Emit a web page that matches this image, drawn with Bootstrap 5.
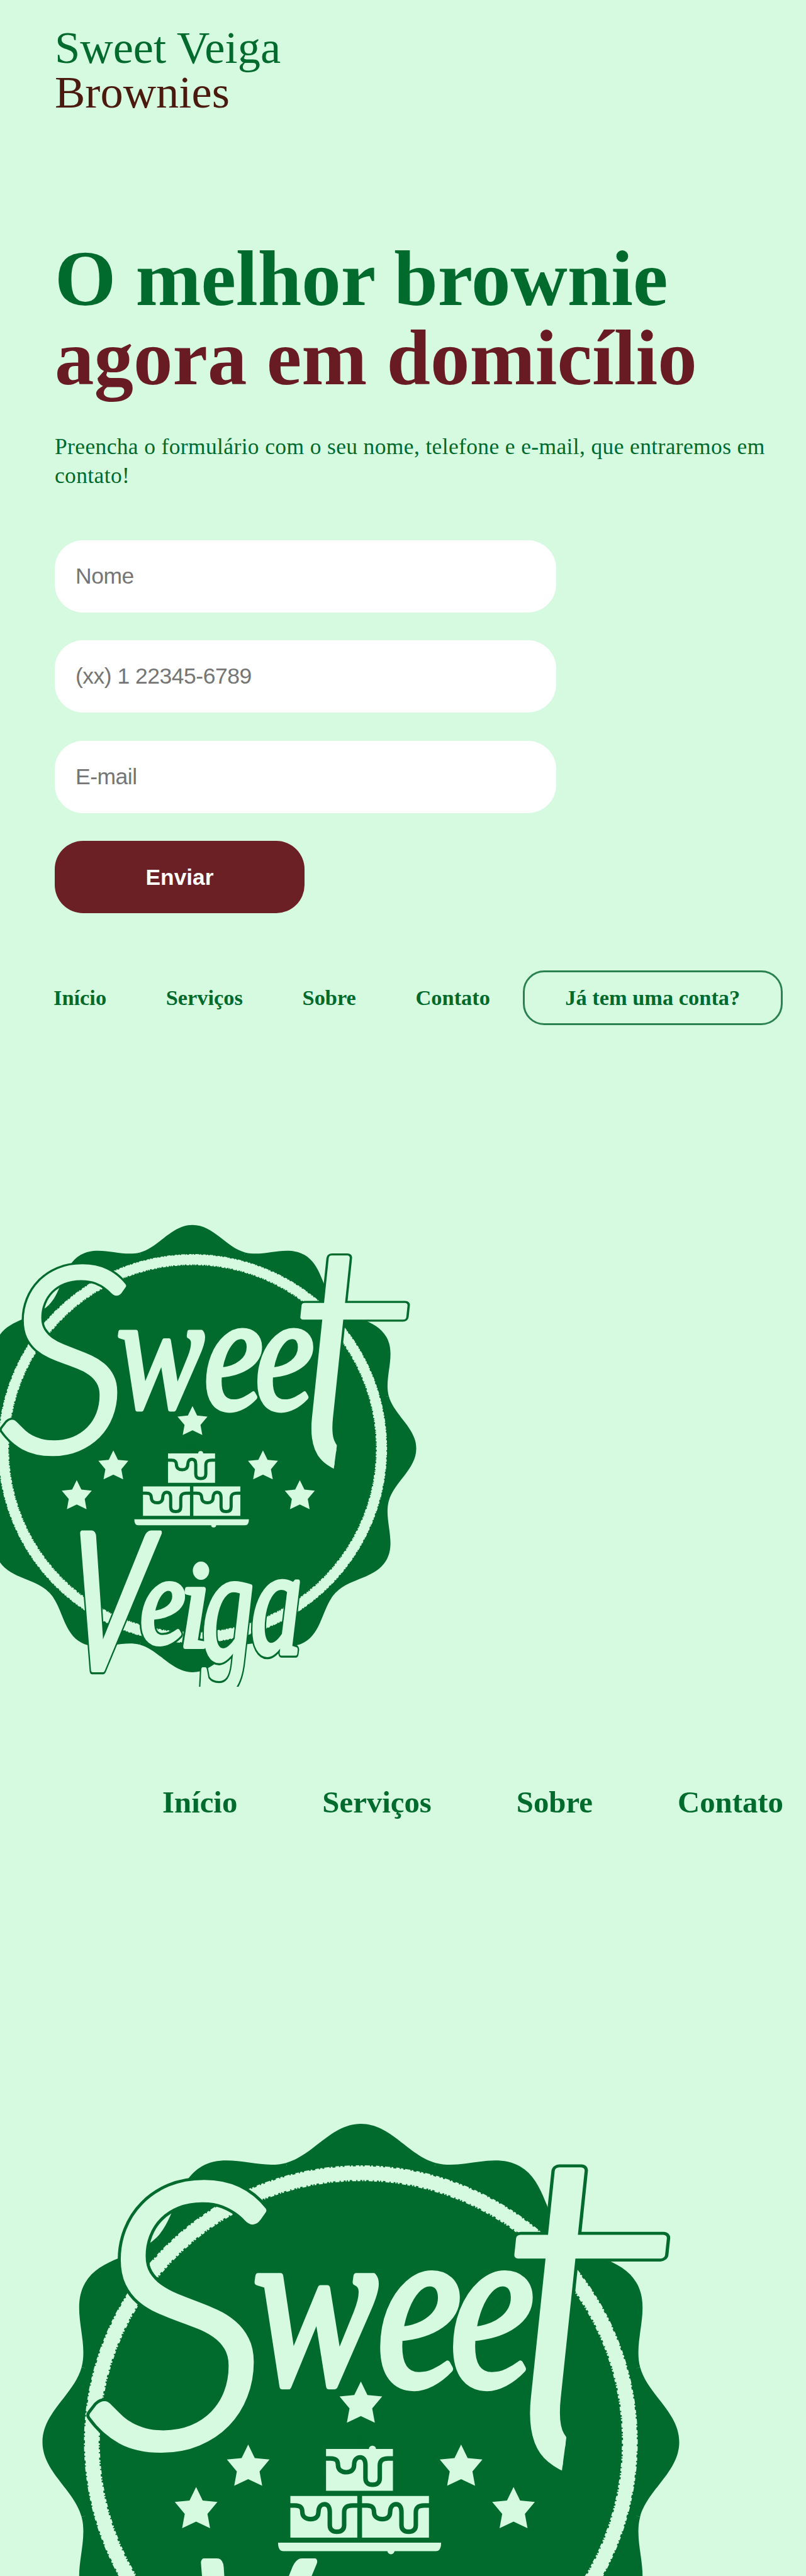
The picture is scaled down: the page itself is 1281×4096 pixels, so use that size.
<!DOCTYPE html>
<html lang="pt-BR">
<head>
<meta charset="utf-8">
<meta name="viewport" content="width=device-width, initial-scale=1">
<title>Sweet Veiga Brownies</title>
<link href="https://cdn.jsdelivr.net/npm/bootstrap@5.3.0/dist/css/bootstrap.min.css" rel="stylesheet">
<style>
:root{--leaf:#016a2d;--mint:#d6fae0;--cocoa:#6b2026}
body{background:var(--mint);font-family:"Liberation Serif",serif;color:var(--leaf);overflow-x:hidden}
.page-pad{padding-left:87px;padding-right:38px}
.brand{padding-top:40px;font-size:72.5px;line-height:71.25px;margin-bottom:197px}
.brand-sub{color:#4a1a0e}
.headline{font-size:125px;line-height:126.6px;font-weight:700;margin-bottom:55.5px;white-space:nowrap}
.headline-sub{color:#691b23}
.intro{font-size:35.5px;line-height:45.6px;letter-spacing:.36px;margin-bottom:79.6px}
.signup{gap:44.5px;width:797px}
.signup .form-control{height:115px;border:0;border-radius:45px;padding:0 33px;font:35.5px "Liberation Sans",sans-serif;letter-spacing:-.5px}
.signup .form-control::placeholder{color:#757575}
.signup .btn{width:397px;height:115px;border:0;border-radius:45px;background:var(--cocoa);color:#fff;font:700 35.3px "Liberation Sans",sans-serif}
.menu a{color:var(--leaf);font-weight:700;text-decoration:none;white-space:nowrap}
.menu-main{margin-top:91px;height:86.4px;padding-left:85px;font-size:34.4px;gap:94.6px}
.menu-main .account{margin-left:-43px;width:413.5px;height:86.4px;border:3px solid #2b8251;border-radius:34px}
.menu-foot{height:60px;margin-top:154px;padding-right:36px;font-size:48.8px;line-height:60px;gap:135px}
.seal-a{width:680.5px;height:760.6px;margin-top:291.5px}
.seal-b{width:1281px;height:756.4px;margin-top:443.5px}
</style>
<script src="https://cdn.jsdelivr.net/npm/bootstrap@5.3.0/dist/js/bootstrap.bundle.min.js"></script>
</head>
<body>
<header class="page-pad">
  <div class="brand">Sweet Veiga<br><span class="brand-sub">Brownies</span></div>
</header>
<main>
  <section class="page-pad">
    <h1 class="headline">O melhor brownie<br><span class="headline-sub">agora em domicílio</span></h1>
    <p class="intro">Preencha o formulário com o seu nome, telefone e e-mail, que entraremos em contato!</p>
    <form class="signup d-flex flex-column align-items-start">
      <input class="form-control" type="text" placeholder="Nome">
      <input class="form-control" type="tel" placeholder="(xx) 1 22345-6789">
      <input class="form-control" type="email" placeholder="E-mail">
      <button class="btn" type="button">Enviar</button>
    </form>
  </section>
  <nav class="menu menu-main d-flex align-items-center">
    <a href="#">Início</a><a href="#">Serviços</a><a href="#">Sobre</a><a href="#">Contato</a>
    <a href="#" class="account d-flex align-items-center justify-content-center">Já tem uma conta?</a>
  </nav>
  <svg class="seal-a d-block" viewBox="0 0 1020 1140" role="img" aria-label="Sweet Veiga">
    <defs>
      <path id="lobe" d="M0 0L-125.3 -467.5C-79.8 -479.7 -50 -533 0 -533C50 -533 79.8 -479.7 125.3 -467.5Z"/>
      <path id="star" d="M0 0L11 22.5L35.7 25L19 45L23.4 69L0 57.8L-23.4 69L-19 45L-35.7 25L-11 22.5Z"/>
      <clipPath id="stem"><path d="M650 80H1010V300H838L790 660H650Z"/></clipPath>
      <g id="slice">
        <path fill="#d6fae0" d="M0 0H112V70H0Z"/>
        <path fill="none" stroke="#016a2d" stroke-width="7.5" d="M-2 16H8C17 16 20 20 20 27C20 35 26 39 34 39C42 39 47 35 47 27C47 19 51 14 57 14C63 14 66 19 66 27V49C66 57 71 60 78 60C85 60 90 57 90 49V28C90 19 95 16 104 16H114"/>
      </g>
    </defs>
    <g id="seal">
      <g fill="#016a2d" transform="translate(458.6 573)">
        <circle r="478"/>
        <use href="#lobe"/><use href="#lobe" transform="rotate(30)"/><use href="#lobe" transform="rotate(60)"/><use href="#lobe" transform="rotate(90)"/><use href="#lobe" transform="rotate(120)"/><use href="#lobe" transform="rotate(150)"/><use href="#lobe" transform="rotate(180)"/><use href="#lobe" transform="rotate(210)"/><use href="#lobe" transform="rotate(240)"/><use href="#lobe" transform="rotate(270)"/><use href="#lobe" transform="rotate(300)"/><use href="#lobe" transform="rotate(330)"/>
      </g>
      <g fill="none" stroke="#d6fae0" transform="translate(458.6 573)">
        <circle r="450.5" stroke-width="23"/>
        <circle r="462" stroke-width="3" stroke-dasharray="4 3 9 2 3 5 6 2"/>
        <circle r="438.5" stroke-width="3" stroke-dasharray="3 4 7 2 5 3 2 2"/>
      </g>
      <g fill="#d6fae0">
        <use href="#star" x="458.6" y="471.7"/>
        <use href="#star" x="270" y="577.3"/><use href="#star" x="626.4" y="577.3"/>
        <use href="#star" x="182.8" y="648.4"/><use href="#star" x="714.2" y="648.4"/>
        <use href="#slice" x="400.3" y="584.5"/><use href="#slice" x="340.6" y="663.2"/><use href="#slice" x="460.6" y="663.2"/>
        <circle cx="478" cy="585" r="6"/><circle cx="509" cy="755" r="6"/>
        <path d="M320 741.4H593Q593 755.7 584 755.7H329Q320 755.7 320 741.4Z"/>
      </g>
      <g fill="#016a2d" stroke="#016a2d" stroke-width="22" stroke-linejoin="round">
        <g id="lettering" font-family="Liberation Serif, serif" font-style="italic">
          <text transform="translate(0 580) scale(1.02 1)" font-family="Lato, sans-serif" font-weight="300" font-size="615">S</text>
          <text transform="translate(278 475) scale(.8 1)" font-size="390">w</text>
          <text transform="translate(486 478) scale(.8 1)" font-size="396">e</text>
          <text transform="translate(608 478) scale(.8 1)" font-size="396">e</text>
          <g clip-path="url(#stem)"><text transform="translate(643 630) skewX(-6) scale(1.11 1)" font-family="DejaVu Sans, sans-serif" font-style="normal" font-weight="200" font-size="728">t</text></g>
          <text transform="translate(150 1100) skewX(-5) scale(.66 1)" font-family="Lato, sans-serif" font-size="455">V</text>
          <text transform="translate(334 1036) scale(.81 1)" font-size="299">e</text>
          <text transform="translate(427 1044) scale(.9 1)" font-size="295">i</text>
          <text transform="translate(481 1074) scale(.65 1)" font-size="380">g</text>
          <text transform="translate(598 1061) scale(.67 1)" font-size="363">a</text>
        </g>
      </g>
      <use href="#lettering" fill="#d6fae0" stroke="#d6fae0" stroke-width="12" stroke-linejoin="round"/>
    </g>
  </svg>
  <nav class="menu menu-foot d-flex justify-content-end">
    <a href="#">Início</a><a href="#">Serviços</a><a href="#">Sobre</a><a href="#">Contato</a>
  </nav>
  <svg class="seal-b d-block" viewBox="-145.5 0 1349.3 796.7" role="img" aria-label="Sweet Veiga"><use href="#seal"/></svg>
</main>
</body>
</html>
